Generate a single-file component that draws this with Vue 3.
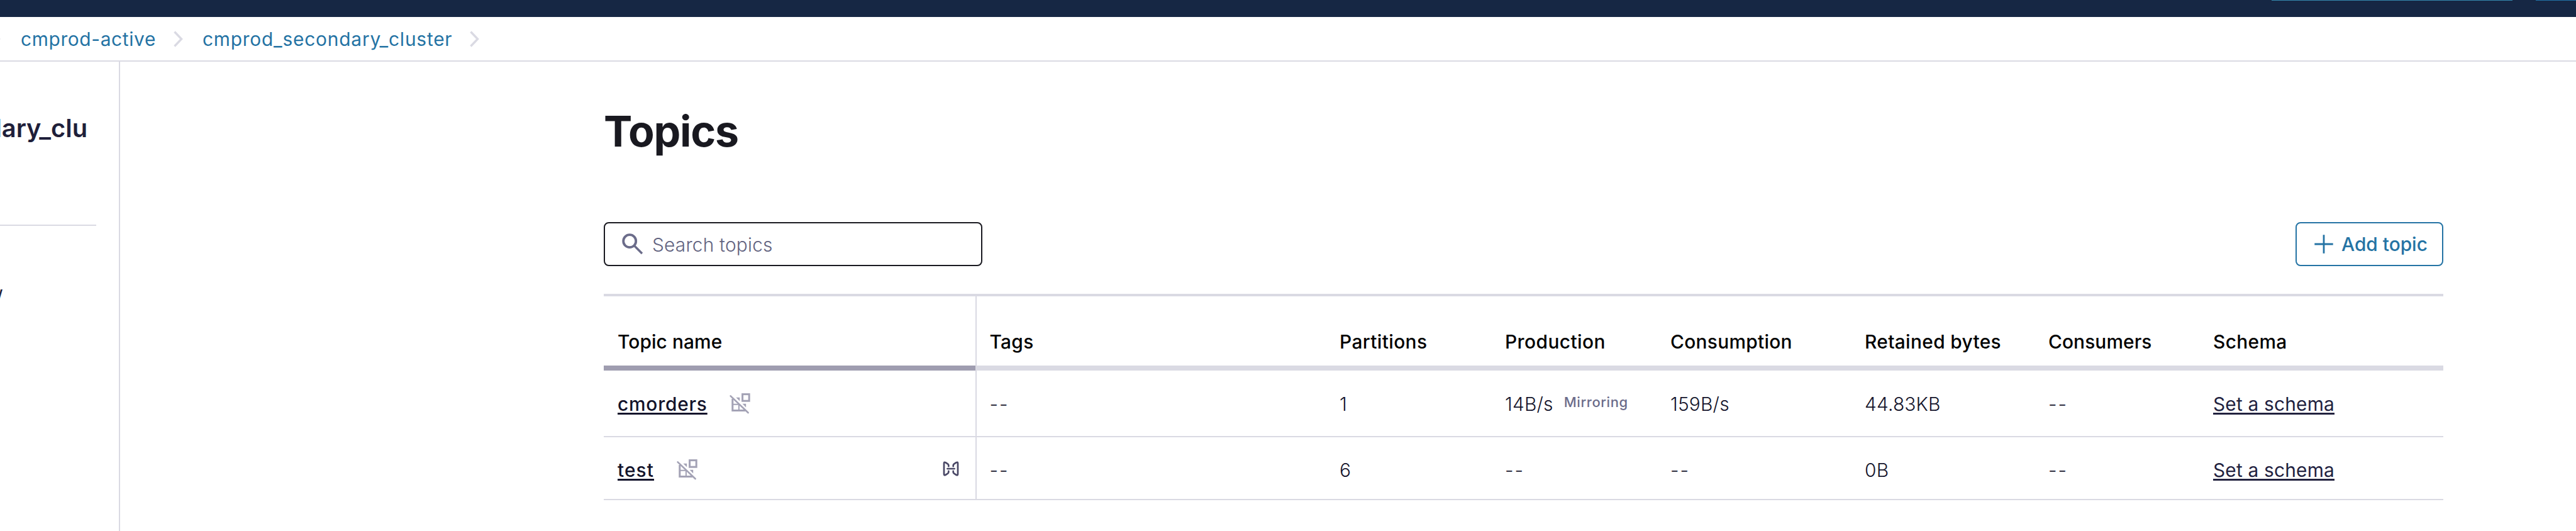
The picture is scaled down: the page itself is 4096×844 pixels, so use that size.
<script setup>
const columns = [
  { key: 'name', label: 'Topic name', track: 0.1 },
  { key: 'tags', label: 'Tags', track: 0.3 },
  { key: 'partitions', label: 'Partitions', track: 0.4 },
  { key: 'production', label: 'Production', track: 0.45 },
  { key: 'consumption', label: 'Consumption', track: 0.3 },
  { key: 'retained', label: 'Retained bytes', track: 0.35 },
  { key: 'consumers', label: 'Consumers', track: 0.1 },
  { key: 'schema', label: 'Schema', track: 0.35 },
]

const topics = [
  {
    name: 'cmorders', tags: '--', partitions: '1', production: '14B/s', mirroring: true,
    consumption: '159B/s', retained: '44.83KB', consumers: '--', linked: false,
  },
  {
    name: 'test', tags: '--', partitions: '6', production: '--', mirroring: false,
    consumption: '--', retained: '0B', consumers: '--', linked: true,
  },
]

const plainKeys = ['tags', 'partitions', 'production', 'consumption', 'retained', 'consumers']
</script>

<template>
  <div class="page">
    <header class="navbar">
      <span class="nav-box"></span>
      <span class="nav-button"></span>
    </header>

    <nav class="crumbs">
      <svg class="chevron first" viewBox="0 0 16 26"><path d="M2.5 1.5L13.5 13L2.5 24.5" /></svg>
      <a class="crumb">cmprod-active</a>
      <svg class="chevron" viewBox="0 0 16 26"><path d="M2.5 1.5L13.5 13L2.5 24.5" /></svg>
      <a class="crumb wide">cmprod_secondary_cluster</a>
      <svg class="chevron" viewBox="0 0 16 26"><path d="M2.5 1.5L13.5 13L2.5 24.5" /></svg>
    </nav>

    <div class="body">
      <aside class="sidebar">
        <div class="cluster"><span>dary_clu</span></div>
        <div class="rule"></div>
        <div class="side-link"><span>w</span></div>
      </aside>

      <main class="main">
        <h1 class="title">Topics</h1>

        <div class="toolbar">
          <div class="search">
            <svg class="search-icon" viewBox="0 0 34 34">
              <circle cx="12.2" cy="12.2" r="10" />
              <path d="M19.5 19.5L32 32" />
            </svg>
            <span class="placeholder">Search topics</span>
          </div>
          <button class="add">
            <svg class="plus" viewBox="0 0 32 32"><path d="M16 1.3V30.7M1.3 16H30.7" /></svg>
            <span class="add-label">Add topic</span>
          </button>
        </div>

        <section class="table">
          <div class="row head">
            <div v-for="c in columns" :key="c.key" class="cell" :class="c.key">
              <span :style="{ letterSpacing: c.track + 'px' }">{{ c.label }}</span>
            </div>
          </div>

          <div v-for="t in topics" :key="t.name" class="row entry" :class="{ last: t.linked }">
            <div class="cell name">
              <a class="topic">{{ t.name }}</a>
              <svg class="no-catalog" viewBox="0 0 38 38">
                <path class="pane" d="M6.8 11V29.4H27" />
                <path class="thin" d="M7 19.8H16.5M16.9 20V29" />
                <path class="fill" d="M12.4 8.8H18.2V14.4ZM22.6 18.8H28.2V24.4Z" />
                <rect class="pane" x="22.6" y="3.6" width="10.6" height="10.6" />
                <path class="slash" d="M3.6 6.4L31.6 33" />
              </svg>
              <svg v-if="t.linked" class="mirror" viewBox="0 0 30 28">
                <path d="M11.3 10.2V8.8Q11.3 7.5 10.2 6.7L6.6 4.2Q4 2.9 4 5.4V22.6Q4 25.1 6.6 23.8L10.2 21.3Q11.3 20.5 11.3 19.2V17.8" />
                <path d="M18.7 10.2V8.8Q18.7 7.5 19.8 6.7L23.4 4.2Q26 2.9 26 5.4V22.6Q26 25.1 23.4 23.8L19.8 21.3Q18.7 20.5 18.7 19.2V17.8" />
                <path d="M9.4 14H20.6" />
              </svg>
            </div>
            <div v-for="k in plainKeys" :key="k" class="cell plain" :class="k">
              <span :class="{ dash: t[k] === '--' }">{{ t[k] }}</span>
              <span v-if="k === 'production' && t.mirroring" class="tag">Mirroring</span>
            </div>
            <div class="cell schema"><a class="set">Set a schema</a></div>
          </div>
        </section>
      </main>
    </div>
  </div>
</template>

<style>
body { margin: 0; background: #fff; overflow: hidden; }
</style>

<style scoped>
.page {
  width: 4096px; height: 844px; overflow: hidden; background: #fff;
  display: flex; flex-direction: column;
  font-family: Inter, "Liberation Sans", sans-serif; font-size: 29.85px; color: #1f1f3a;
}
.page * { box-sizing: border-box; }

.navbar {
  height: 27px; flex: none; background: #162744;
  display: flex; justify-content: flex-end; align-items: flex-start; gap: 37px;
}
.nav-box { width: 383px; height: 1px; background: #3587ac; }
.nav-button { width: 64px; height: 1px; background: #2272a6; }

.crumbs {
  height: 71px; flex: none; display: flex; align-items: center;
  border-bottom: 2px solid #dadae3; line-height: 67px; white-space: nowrap;
}
.crumb { color: #2473a4; letter-spacing: 0.65px; padding-top: 2px; }
.crumb.wide { letter-spacing: 0.8px; }
.chevron { width: 16px; height: 26px; flex: none; margin: 0 31px 0 27px; }
.chevron.first { margin: 0 32px 0 -15px; }
.chevron path { fill: none; stroke: #dadae3; stroke-width: 3.4; }

.body { flex: 1; display: flex; min-height: 0; }
.sidebar { width: 191px; flex: none; border-right: 2px solid #dadae3; padding-top: 81px; }
.cluster {
  width: 139px; display: flex; justify-content: flex-end;
  font-size: 39.8px; line-height: 50px; font-weight: 600; color: #1f1f3a; white-space: nowrap;
}
.rule { width: 153px; height: 2px; margin-top: 128px; background: #dadae3; }
.side-link {
  width: 5px; margin-top: 87px; display: flex; justify-content: flex-end;
  line-height: 40px; white-space: nowrap;
}

.main { flex: 1; padding: 70px 211px 0 769px; }
.title {
  margin: 0 0 105px; font-size: 68px; line-height: 80px; font-weight: 700;
  letter-spacing: -1.2px; color: #191920;
}
.toolbar { display: flex; justify-content: space-between; height: 70px; }
.search {
  width: 602px; border: 2px solid #191920; border-radius: 8px;
  display: flex; align-items: center; padding-left: 27px; gap: 13px;
}
.search-icon { width: 34px; height: 34px; flex: none; }
.search-icon circle { fill: none; stroke: #6b6c8a; stroke-width: 3.8; }
.search-icon path { fill: none; stroke: #6b6c8a; stroke-width: 3.4; }
.placeholder { color: #62637f; font-weight: 300; letter-spacing: 0.2px; line-height: 40px; padding: 2px 0 0 1px; }
.add {
  width: 235px; border: 2px solid #2473a4; border-radius: 8px; background: #fff;
  display: flex; align-items: center; padding: 0 0 0 27px; gap: 12px;
  font: 500 29.85px/40px Inter, "Liberation Sans", sans-serif; color: #2473a4; white-space: nowrap;
}
.add-label { padding-bottom: 1px; }
.plus { width: 32px; height: 32px; flex: none; }
.plus path { fill: none; stroke: #2473a4; stroke-width: 2.8; }

.table { margin-top: 44px; border-top: 4px solid #dadae3; }
.row { display: grid; grid-template-columns: 591px 556px 263px 263px 309px 292px 263px 388px; line-height: 40px; }
.cell { padding-left: 23px; display: flex; align-items: flex-start; white-space: nowrap; }
.cell.name, .cell.schema { padding-left: 22px; }
.cell.tags { border-left: 2px solid #dadae3; padding-left: 20.5px; }

.head { height: 118px; font-weight: 500; color: #000; }
.head .cell { padding-top: 52px; border-bottom: 8px solid #dadae3; }
.head .name { border-bottom-color: #9f9db0; }

.entry { height: 106px; border-bottom: 2px solid #dadae3; }
.entry .cell { padding-top: 33px; }
.entry.last { height: 100px; }
.entry.last .cell { padding-top: 32px; }
.plain { font-weight: 300; letter-spacing: 0.2px; color: #14142b; }

.topic, .set { text-decoration: underline; text-decoration-thickness: 3px; text-underline-offset: 3px; text-decoration-skip-ink: none; }
.topic { font-weight: 500; letter-spacing: 0.8px; color: #14142b; }
.last .topic { letter-spacing: 1.1px; }
.set { letter-spacing: 0.2px; color: #22223f; }
.dash { letter-spacing: 2px; }
.tag { margin-left: 17px; font-size: 21.9px; line-height: 34px; font-weight: 500; letter-spacing: 0.6px; color: #6b6c8a; }

.no-catalog { width: 38px; height: 38px; margin: 1px 0 0 33px; flex: none; }
.last .no-catalog { margin: 1px 0 0 34px; }
.no-catalog .pane { fill: none; stroke: #a3a2b5; stroke-width: 3; }
.no-catalog .thin { fill: none; stroke: #a3a2b5; stroke-width: 2; }
.no-catalog .fill { fill: #a3a2b5; }
.no-catalog .slash { fill: none; stroke: #a3a2b5; stroke-width: 2.6; stroke-linecap: round; }
.mirror { width: 30px; height: 28px; margin: 4px 24px 0 auto; flex: none; }
.mirror path { fill: none; stroke: #4a4866; stroke-width: 2.7; stroke-linecap: round; }
</style>
